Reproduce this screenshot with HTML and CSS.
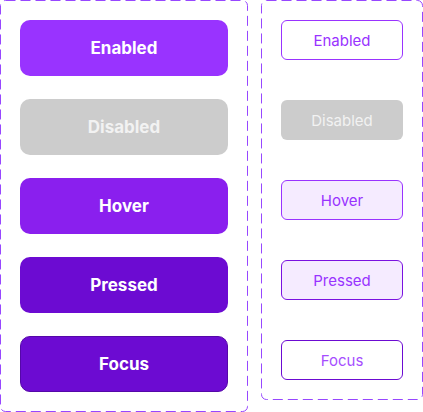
FILE: index.html
```html
<!DOCTYPE html>
<html>
<head>
<meta charset="utf-8">
<link rel="stylesheet" href="styles.css">
</head>
<body>
<div class="page">
  <div class="set set-large">
    <svg class="dash" aria-hidden="true"><rect class="dash-rect"/></svg>
    <div class="btn lg enabled">Enabled</div>
    <div class="btn lg disabled">Disabled</div>
    <div class="btn lg hover">Hover</div>
    <div class="btn lg pressed">Pressed</div>
    <div class="btn lg focus">Focus</div>
  </div>
  <div class="set set-small">
    <svg class="dash" aria-hidden="true"><rect class="dash-rect"/></svg>
    <div class="btn sm enabled">Enabled</div>
    <div class="btn sm disabled">Disabled</div>
    <div class="btn sm hover">Hover</div>
    <div class="btn sm pressed">Pressed</div>
    <div class="btn sm focus">Focus</div>
  </div>
</div>
</body>
</html>
```
FILE: styles.css
```css
html, body {
  margin: 0;
  padding: 0;
  background: #ffffff;
}
body {
  font-family: Inter, "Noto Sans", sans-serif;
  width: 423px;
  height: 412px;
  overflow: hidden;
}
.page {
  display: flex;
  align-items: flex-start;
  gap: 13px;
}
.set {
  position: relative;
  display: flex;
  flex-direction: column;
  padding: 20px;
  box-sizing: border-box;
}
.set-large {
  width: 248px;
  height: 412px;
  gap: 23px;
}
.set-small {
  width: 162px;
  height: 400px;
  gap: 40px;
}
.dash {
  position: absolute;
  left: 0;
  top: 0;
  width: 100%;
  height: 100%;
  overflow: visible;
  pointer-events: none;
}
.dash-rect {
  x: 0.5px;
  y: 0.5px;
  width: calc(100% - 1px);
  height: calc(100% - 1px);
  rx: 5px;
  fill: none;
  stroke: #9747ff;
  stroke-width: 1px;
  stroke-dasharray: 10 5;
}
.btn {
  display: flex;
  align-items: center;
  justify-content: center;
  box-sizing: border-box;
}
.lg {
  height: 56px;
  border-radius: 10px;
  color: #ffffff;
  font-size: 17px;
  font-weight: 700;
}
.lg.enabled { background: #9933ff; }
.lg.disabled { background: #cccccc; color: #f2f2f2; }
.lg.hover { background: #8a1fee; }
.lg.pressed { background: #6c0bd2; }
.lg.focus { background: #6c0bd2; border: 1px solid #5508a8; }

.sm {
  height: 40px;
  border-radius: 6px;
  font-size: 15px;
  font-weight: 400;
  color: #9933ff;
  background: #ffffff;
  border: 1px solid #9933ff;
}
.sm.disabled { background: #cccccc; color: #f2f2f2; border: none; }
.sm.hover { background: #f5ebff; border-color: #9933ff; }
.sm.pressed { background: #f5ebff; border-color: #7a12e0; }
.sm.focus { border-color: #6c0bd2; color: #a64dff; }
```
